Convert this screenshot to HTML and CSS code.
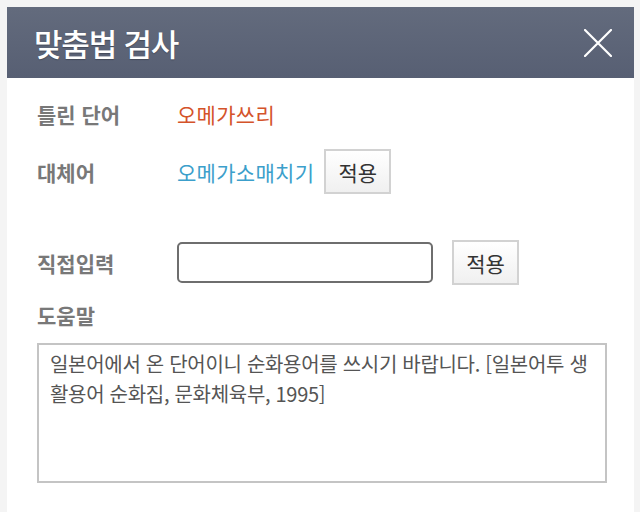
FILE: index.html
```html
<!DOCTYPE html>
<html lang="ko">
<head>
<meta charset="utf-8">
<title>맞춤법 검사</title>
<link rel="stylesheet" href="styles.css">
</head>
<body>
<div class="dialog">
  <div class="header">
    <h1 class="title">맞춤법 검사</h1>
    <button class="close" aria-label="닫기">
      <svg width="28" height="28" viewBox="0 0 28 28"><path d="M1 1 L27 27 M27 1 L1 27" stroke="#fff" stroke-width="2.2" stroke-linecap="round" fill="none"/></svg>
    </button>
  </div>
  <div class="content">
    <div class="row row-wrong">
      <span class="label">틀린 단어</span>
      <span class="value wrong">오메가쓰리</span>
    </div>
    <div class="row row-sub">
      <span class="label">대체어</span>
      <span class="value sub">오메가소매치기</span>
      <button class="apply">적용</button>
    </div>
    <div class="row row-input">
      <span class="label">직접입력</span>
      <input class="direct" type="text">
      <button class="apply apply-wide">적용</button>
    </div>
    <div class="label help-label">도움말</div>
    <div class="help">일본어에서 온 단어이니 순화용어를 쓰시기 바랍니다. [일본어투 생활용어 순화집, 문화체육부, 1995]</div>
  </div>
</div>
</body>
</html>
```
FILE: styles.css
```css
html, body {
  margin: 0;
  padding: 0;
  background: #f4f4f4;
  font-family: "Noto Sans CJK KR", "Noto Sans", sans-serif;
}
.dialog {
  margin: 7px 6px 0 7px;
  background: #fff;
  height: 505px;
}
.header {
  height: 71px;
  background: linear-gradient(#636b7d, #575f73);
  display: flex;
  align-items: center;
  justify-content: space-between;
  padding: 0 22px 0 27px;
}
.title {
  margin: 0;
  color: #fff;
  font-size: 31px;
  font-weight: 500;
  letter-spacing: -1.2px;
  text-shadow: 0 1px 1px rgba(0,0,0,0.25);
}
.close {
  background: none;
  border: 0;
  padding: 0;
  width: 28px;
  height: 28px;
  display: flex;
}
.content {
  padding: 21px 0 0 30px;
  display: flex;
  flex-direction: column;
}
.row {
  display: flex;
  align-items: center;
}
.row-wrong { height: 30px; }
.row-sub { height: 45px; margin-top: 20px; }
.row-input { height: 45px; margin-top: 46px; }
.label {
  width: 140px;
  flex: none;
  color: #787878;
  font-size: 21px;
  font-weight: 700;
  letter-spacing: 0;
  line-height: 30px;
}
.value {
  font-size: 21px;
  line-height: 30px;
  letter-spacing: 0.3px;
}
.wrong { color: #d4532a; }
.sub { color: #3c9fcb; }
.apply {
  margin-left: 10px;
  width: 67px;
  height: 45px;
  border: 2px solid #d2d2d2;
  background: linear-gradient(#ffffff, #f0f0f0);
  font-family: inherit;
  font-size: 21px;
  color: #333;
  padding: 0;
}
.apply-wide { margin-left: 19px; }
.direct {
  width: 256px;
  height: 41px;
  box-sizing: border-box;
  border: 2px solid #6e6e6e;
  border-radius: 5px;
  margin: 0;
  padding: 0 8px;
  font-family: inherit;
  font-size: 18px;
}
.help-label {
  margin-top: 15px;
}
.help {
  margin-top: 13px;
  width: 570px;
  height: 140px;
  box-sizing: border-box;
  border: 2px solid #c4c4c4;
  padding: 4px 12px 0 11px;
  color: #555;
  font-size: 20px;
  line-height: 30px;
  letter-spacing: -0.3px;
}
```
